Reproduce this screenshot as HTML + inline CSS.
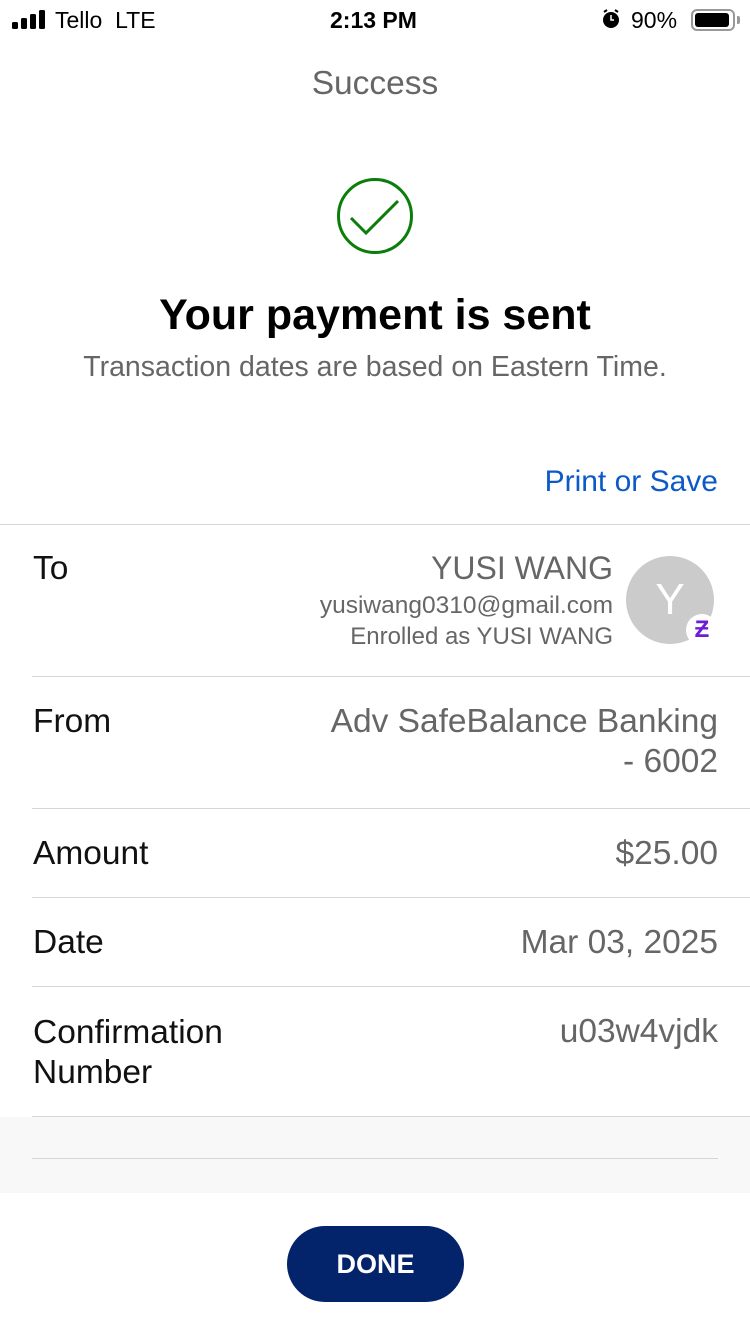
<!DOCTYPE html>
<html><head><meta charset="utf-8"><style>
*{margin:0;padding:0;box-sizing:border-box}
body{width:750px;height:1334px;background:#fff;font-family:"Liberation Sans",sans-serif;position:relative;overflow:hidden;color:#000}
.a{position:absolute;white-space:nowrap}
.r{text-align:right}
.line{position:absolute;height:1px;background:#d6d6d6}
.lbl{font-size:33.5px;color:#111}
.val{font-size:33.5px;color:#666}
</style></head><body>
<svg class="a" style="left:12px;top:10px" width="36" height="20"><rect x="0" y="12" width="6" height="7" rx="1.5"/><rect x="9" y="8" width="6" height="11" rx="1.5"/><rect x="18" y="4" width="6" height="15" rx="1.5"/><rect x="27" y="0" width="6" height="19" rx="1.5"/></svg>
<div class="a" style="left:55px;top:7px;font-size:23px">Tello&nbsp;&nbsp;LTE</div>
<div class="a" style="left:330px;top:7px;font-size:23px;font-weight:bold">2:13 PM</div>
<svg class="a" style="left:601px;top:9px" width="20" height="22"><circle cx="10" cy="11" r="8"/><path d="M3 3l3-2M17 3l-3-2" stroke="#000" stroke-width="2"/><path d="M10 6v5h3" stroke="#fff" stroke-width="1.5" fill="none"/></svg>
<div class="a" style="left:631px;top:7px;font-size:23px">90%</div>
<div class="a" style="left:691px;top:9px;width:44px;height:22px;border:2px solid #999;border-radius:6px;padding:2px"><div style="width:34px;height:14px;background:#000;border-radius:3px"></div></div>
<div class="a" style="left:737px;top:16px;width:3px;height:8px;background:#999;border-radius:0 2px 2px 0"></div>

<div class="a" style="left:0;width:750px;text-align:center;top:65px;font-size:33.5px;color:#666">Success</div>
<svg class="a" style="left:335px;top:176px" width="80" height="80"><circle cx="40" cy="40" r="36.5" fill="none" stroke="#0a7d0a" stroke-width="3"/><path d="M16 42l15 15 32-32" fill="none" stroke="#0a7d0a" stroke-width="3"/></svg>
<div class="a" style="left:0;width:750px;text-align:center;top:291px;font-size:43px;font-weight:bold">Your payment is sent</div>
<div class="a" style="left:0;width:750px;text-align:center;top:351px;font-size:28.5px;color:#666">Transaction dates are based on Eastern Time.</div>
<div class="a r" style="right:32px;top:465px;font-size:30px;color:#0b5ac8">Print or Save</div>
<div class="line" style="left:0;width:750px;top:524px"></div>

<div class="a lbl" style="left:33px;top:550px">To</div>
<div class="a val r" style="right:137px;top:550px;font-size:32px">YUSI WANG</div>
<div class="a r" style="right:137px;top:592px;font-size:24.5px;color:#666">yusiwang0310@gmail.com</div>
<div class="a r" style="right:137px;top:623px;font-size:24px;color:#666">Enrolled as YUSI WANG</div>
<div class="a" style="left:626px;top:556px;width:88px;height:88px;border-radius:50%;background:#cbcbcb;color:#fff;font-size:44px;text-align:center;line-height:88px">Y</div>
<div class="a" style="left:686px;top:614px;width:32px;height:32px;border-radius:50%;background:#fff;color:#6d1ed4;font-weight:bold;font-size:24px;text-align:center;line-height:32px">Ƶ</div>
<div class="line" style="left:32px;width:718px;top:676px"></div>

<div class="a lbl" style="left:33px;top:703px">From</div>
<div class="a val r" style="right:32px;top:703px">Adv SafeBalance Banking</div>
<div class="a val r" style="right:32px;top:743px">- 6002</div>
<div class="line" style="left:32px;width:718px;top:808px"></div>

<div class="a lbl" style="left:33px;top:835px">Amount</div>
<div class="a val r" style="right:32px;top:835px">$25.00</div>
<div class="line" style="left:32px;width:718px;top:897px"></div>

<div class="a lbl" style="left:33px;top:924px">Date</div>
<div class="a val r" style="right:32px;top:924px">Mar 03, 2025</div>
<div class="line" style="left:32px;width:718px;top:986px"></div>

<div class="a lbl" style="left:33px;top:1014px">Confirmation</div>
<div class="a lbl" style="left:33px;top:1054px">Number</div>
<div class="a val r" style="right:32px;top:1013px">u03w4vjdk</div>
<div class="line" style="left:32px;width:718px;top:1116px"></div>

<div class="a" style="left:0;top:1117px;width:750px;height:76px;background:#f8f8f8"></div>
<div class="line" style="left:32px;width:686px;top:1158px"></div>

<div class="a" style="left:287px;top:1226px;width:177px;height:76px;border-radius:38px;background:#03236a;color:#fff;font-weight:bold;font-size:27px;text-align:center;line-height:76px">DONE</div>
</body></html>
